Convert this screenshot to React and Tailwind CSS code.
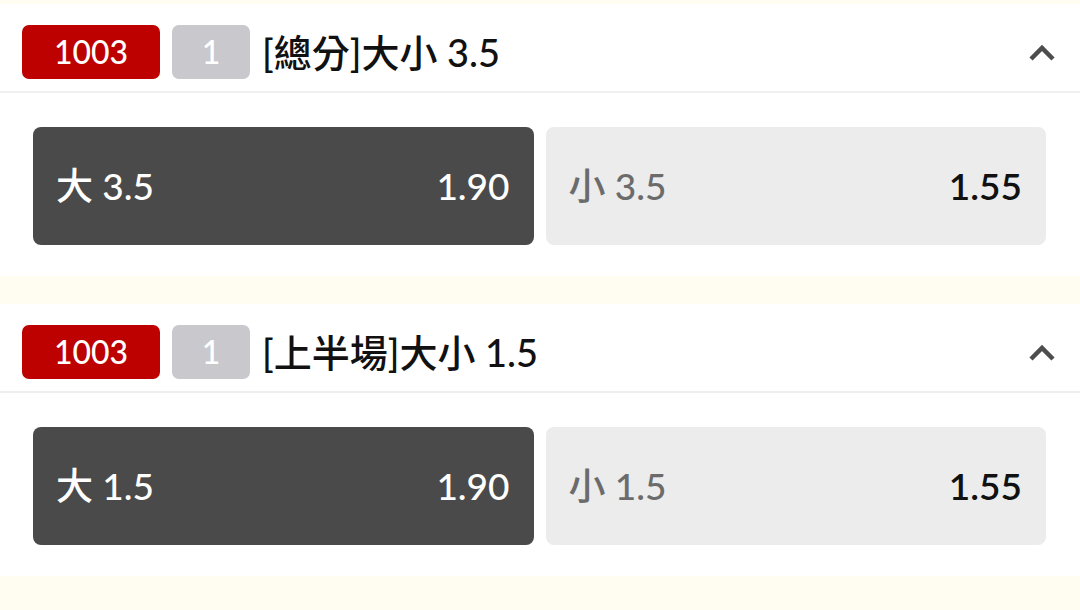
import React from "react";

const markets = [
  {
    id: "1003",
    num: "1",
    title: "[總分]大小 3.5",
    over: { label: "大 3.5", odds: "1.90" },
    under: { label: "小 3.5", odds: "1.55" },
  },
  {
    id: "1003",
    num: "1",
    title: "[上半場]大小 1.5",
    over: { label: "大 1.5", odds: "1.90" },
    under: { label: "小 1.5", odds: "1.55" },
  },
];

function Chevron() {
  return (
    <svg viewBox="0 0 28 18" className="h-[18px] w-[28px]" aria-hidden>
      <path d="M3 15L14 4l11 11" fill="none" stroke="#4d4d4d" strokeWidth="4.5" strokeLinejoin="miter" />
    </svg>
  );
}

function MarketCard({ market }) {
  return (
    <section className="bg-white">
      <div className="flex items-center pl-[22px] pr-[24px] pt-[21px] pb-[12px]">
        <span className="flex h-[54px] w-[138px] items-center justify-center rounded-[7px] bg-[#bd0000] text-[32px] font-medium text-white">
          {market.id}
        </span>
        <span className="ml-[12px] flex h-[54px] w-[78px] items-center justify-center rounded-[7px] bg-[#c8c8cd] text-[32px] font-medium text-white">
          {market.num}
        </span>
        <h2 className="ml-[12px] text-[38px] font-medium leading-none text-[#111]">{market.title}</h2>
        <div className="ml-auto flex items-center pt-[2px]">
          <Chevron />
        </div>
      </div>
      <div className="h-[2px] bg-[#efefef]" />
      <div className="flex gap-[12px] pl-[33px] pr-[34px] pt-[34px] pb-[31px]">
        <button
          type="button"
          className="flex h-[118px] flex-1 items-center justify-between rounded-[8px] bg-[#4a4a4a] pl-[23px] pr-[24px] text-[37px] font-medium text-white"
        >
          <span>{market.over.label}</span>
          <span>{market.over.odds}</span>
        </button>
        <button
          type="button"
          className="flex h-[118px] flex-1 items-center justify-between rounded-[8px] bg-[#ececec] pl-[23px] pr-[24px] text-[37px] font-medium"
        >
          <span className="text-[#6b6b6b]">{market.under.label}</span>
          <span className="font-semibold text-[#111]">{market.under.odds}</span>
        </button>
      </div>
    </section>
  );
}

export default function App() {
  return (
    <div
      className="flex h-[610px] w-[1080px] flex-col gap-[28px] overflow-hidden bg-[#fffcf2] pt-[4px]"
      style={{ fontFamily: "Lato, 'Noto Sans CJK TC', sans-serif" }}
    >
      {markets.map((m, i) => (
        <MarketCard key={i} market={m} />
      ))}
    </div>
  );
}
